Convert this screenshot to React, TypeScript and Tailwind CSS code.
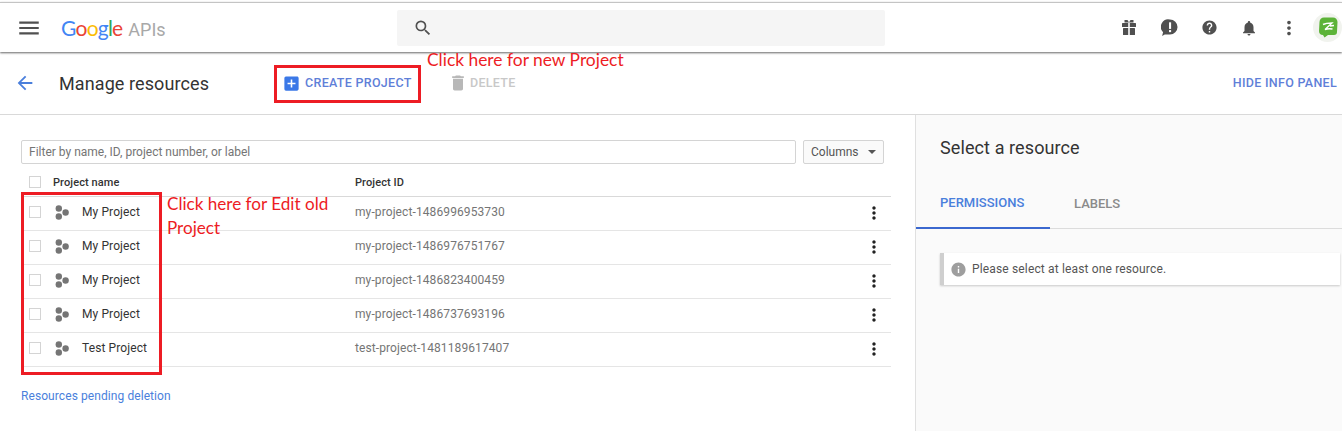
import { MdAddBox, MdArrowBack, MdDelete, MdHelp, MdInfo, MdMenu, MdMoreVert, MdNotifications, MdSearch } from "react-icons/md";

type Project = {
  name: string;
  id: string;
};

const projects: Project[] = [
  { name: "My Project", id: "my-project-1486996953730" },
  { name: "My Project", id: "my-project-1486976751767" },
  { name: "My Project", id: "my-project-1486823400459" },
  { name: "My Project", id: "my-project-1486737693196" },
  { name: "Test Project", id: "test-project-1481189617407" },
];

const ProjectIcon = () => (
  <svg width="14" height="15" viewBox="0 0 14 15" className="fill-[#757575]">
    <circle cx="3.8" cy="3.5" r="3.2" />
    <circle cx="3.8" cy="11.5" r="3.2" />
    <circle cx="10.6" cy="7.5" r="3.2" />
  </svg>
);

const Checkbox = () => <div className="h-3 w-3 border border-[#d4d4d4] bg-white" />;

const Gift = () => (
  <svg width="14" height="15" viewBox="0 0 14 15" className="fill-[#505050]">
    <rect x="0" y="3" width="14" height="4" rx="0.5" />
    <rect x="1" y="8" width="12" height="7" rx="0.5" />
    <path d="M2.5 0h3L7 2.4 8.500 0h3v2.500H2.500z" />
    <rect x="6.200" y="3" width="1.600" height="12" fill="#fff" />
  </svg>
);

const Feedback = () => (
  <svg width="17" height="17" viewBox="0 0 18 18" className="fill-[#505050]">
    <path d="M9.500 0.500a8 8 0 0 1 0 16H4l-2.800 1.500 1-4A8 8 0 0 1 9.500 0.500z" />
    <rect x="8.500" y="3.500" width="2.200" height="7" fill="#fff" />
    <rect x="8.500" y="11.700" width="2.200" height="2.200" fill="#fff" />
  </svg>
);

const Avatar = () => (
  <div className="flex h-[29px] w-[29px] shrink-0 items-center justify-center rounded-full bg-[#f1f3ee]">
    <svg width="20" height="21" viewBox="0 0 20 21">
      <path d="M6 0.500h9c2.500 0 4.500 2 4.500 4.500l-.5 10c0 2-1 3-3 3H10l-3.500 2.500L5 18c-2.500 0-4-1.500-4-4L1.500 5C1.500 2.500 3.500 0.500 6 0.500z" fill="#5cb338" />
      <path d="M5 7.500c3-1.500 6-1.500 9-1.500l-7 6.500c2.500-1 5-1 7.500-.5M12 9l4-.5" fill="none" stroke="#fff" strokeWidth="1.400" />
    </svg>
  </div>
);

const App = () => {
  return (
    <div className="relative h-[431px] w-[1342px] overflow-hidden bg-white font-['Roboto',sans-serif]">
      <div className="h-[2px] bg-white" />
      <header className="relative z-10 flex h-[50px] items-center border-t border-[#c4c4c4] bg-white shadow-[0_1px_2px_rgba(0,0,0,0.6)]">
        <MdMenu size={26} className="ml-[16px] text-[#505050]" />
        <div className="ml-[19px] flex w-[336px] items-baseline font-['Lato',sans-serif] text-[21px] leading-none tracking-[-0.8px]">
          <span className="text-[#4285f4]">G</span>
          <span className="text-[#ea4335]">o</span>
          <span className="text-[#fbbc05]">o</span>
          <span className="text-[#4285f4]">g</span>
          <span className="text-[#34a853]">l</span>
          <span className="text-[#ea4335]">e</span>
          <span className="ml-[6px] font-['Roboto',sans-serif] text-[18px] tracking-normal text-[#a8a8a8]">APIs</span>
        </div>
        <div className="flex h-[36px] w-[488px] items-center rounded-[2px] bg-[#f5f5f5] pl-[16px]">
          <MdSearch size={20} className="text-[#505050]" />
        </div>
        <div className="ml-[224px] flex items-center text-[#505050]">
          <div className="flex w-[40px] justify-center">
            <Gift />
          </div>
          <div className="flex w-[40px] justify-center">
            <Feedback />
          </div>
          <div className="flex w-[40px] justify-center">
            <MdHelp size={17} />
          </div>
          <div className="flex w-[40px] justify-center">
            <MdNotifications size={18} />
          </div>
          <div className="flex w-[40px] justify-center">
            <MdMoreVert size={22} />
          </div>
        </div>
        <div className="ml-[4px]">
          <Avatar />
        </div>
      </header>

      <div className="flex h-[63px] items-center border-b border-[#d9d9d9]">
        <MdArrowBack size={22} className="ml-[14px] text-[#4a7fdc]" />
        <h1 className="ml-[23px] w-[223px] text-[18px] tracking-[0.1px] text-[#333]">Manage resources</h1>
        <div className="flex items-center text-[12.5px] font-medium tracking-[0.3px]">
          <MdAddBox size={19} className="text-[#3b78e7]" />
          <span className="ml-[4px] w-[143px] text-[#5f7fd8]">CREATE PROJECT</span>
          <MdDelete size={20} className="text-[#b8b8b8]" />
          <span className="ml-[2px] text-[#c8c8c8]">DELETE</span>
        </div>
        <span className="ml-auto mr-[5px] text-[12.5px] font-medium tracking-[0.3px] text-[#5f7fd8]">HIDE INFO PANEL</span>
      </div>

      <div className="flex h-[316px]">
        <main className="w-[915px] pl-[21px] pt-[25px]">
          <div className="flex gap-[7px]">
            <div className="flex h-[24px] w-[775px] items-center rounded-[2px] border border-[#d4d4d4] px-[7px] text-[12px] text-[#757575]">
              Filter by name, ID, project number, or label
            </div>
            <div className="flex h-[24px] w-[81px] items-center justify-between rounded-[2px] border border-[#d4d4d4] bg-[#fafafa] pl-[7px] pr-[7px] text-[12px] text-[#555]">
              Columns
              <span className="h-0 w-0 border-x-[4px] border-t-[4px] border-x-transparent border-t-[#555]" />
            </div>
          </div>

          <div className="mt-[6px] w-[870px]">
            <div className="flex h-[27px] items-center border-b border-[#d9d9d9] pt-[1px] text-[11px] font-medium tracking-[0.1px] text-[#333]">
              <div className="ml-[8px] w-[24px] pb-[4px]">
                <Checkbox />
              </div>
              <span className="w-[302px]">Project name</span>
              <span>Project ID</span>
            </div>
            {projects.map((project) => (
              <div key={project.id} className="flex h-[34px] items-center border-b border-[#e5e5e5] pb-[3px] text-[12px] tracking-[0.1px]">
                <div className="ml-[8px] w-[26px] pb-[1px]">
                  <Checkbox />
                </div>
                <div className="w-[27px] pt-[1px]">
                  <ProjectIcon />
                </div>
                <span className="w-[273px] text-[#333]">{project.name}</span>
                <span className="text-[#757575]">{project.id}</span>
                <MdMoreVert size={20} className="ml-auto mr-[7px] mt-[2px] text-[#222]" />
              </div>
            ))}
          </div>

          <a className="mt-[20px] block text-[12px] tracking-[0.08px] text-[#4a7fdc]">Resources pending deletion</a>
        </main>

        <aside className="w-[427px] border-l border-[#e0e0e0] bg-[#fafafa]">
          <h2 className="pl-[24px] pt-[22px] text-[18px] leading-[22px] tracking-[0.1px] text-[#333]">Select a resource</h2>
          <div className="mt-[20px] flex h-[50px] items-center border-b border-[#dcdcdc] text-[13px] font-medium">
            <div className="flex h-[50px] w-[134px] items-center border-b-[2px] border-[#3b68cf] pl-[24px] pt-[1px] text-[#4a7fdc]">PERMISSIONS</div>
            <span className="ml-[24px] text-[#8a8a8a]">LABELS</span>
          </div>
          <div className="ml-[24px] mt-[24px] flex h-[32px] w-[400px] items-center border-l-[4px] border-[#cfcfcf] bg-white pl-[6px] text-[12px] tracking-[0.15px] text-[#555] shadow-[0_1px_2px_rgba(0,0,0,0.2)]">
            <MdInfo size={17} className="text-[#9e9e9e]" />
            <span className="ml-[5px]">Please select at least one resource.</span>
          </div>
        </aside>
      </div>

      {/* annotations drawn over the page */}
      <div className="absolute left-[274px] top-[65px] z-20 h-[38px] w-[147px] border-[3px] border-[#ed1c24]" />
      <div className="absolute left-[21px] top-[192px] z-20 h-[183px] w-[141px] border-[3px] border-[#ed1c24]" />
      <span className="absolute left-[427px] top-[49px] z-20 font-['Lato',sans-serif] text-[17.4px] leading-[22px] text-[#ed1c24]">Click here for new Project</span>
      <span className="absolute left-[167px] top-[192px] z-20 w-[180px] font-['Lato',sans-serif] text-[17.1px] leading-[24px] text-[#ed1c24]">Click here for Edit old Project</span>
    </div>
  );
};

export default App;
